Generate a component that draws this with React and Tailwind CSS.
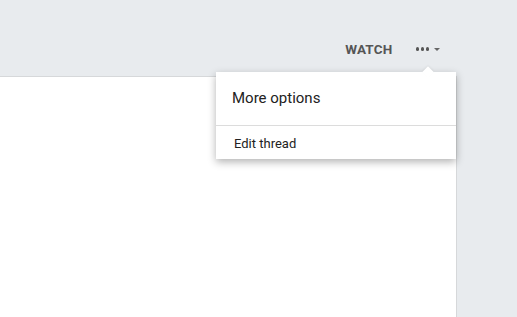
export default function App() {
  return (
    <div className="relative w-[517px] h-[317px] overflow-hidden bg-[#e8ebee] font-['Roboto','Liberation_Sans',sans-serif]">
      {/* Top bar */}
      <div className="h-[76px] flex items-start justify-end pr-[77px] pt-[41px]">
        <span className="text-[13.5px] font-bold text-[#555] tracking-[0.2px] leading-[16px]">WATCH</span>
        <div className="ml-[23px] flex items-center h-[16px] gap-[5px]">
          <div className="flex gap-[1.5px]">
            <span className="w-[3.5px] h-[3.5px] rounded-full bg-[#555]" />
            <span className="w-[3.5px] h-[3.5px] rounded-full bg-[#555]" />
            <span className="w-[3.5px] h-[3.5px] rounded-full bg-[#555]" />
          </div>
          <span className="w-0 h-0 border-l-[3px] border-r-[3px] border-t-[3px] border-l-transparent border-r-transparent border-t-[#666]" />
        </div>
      </div>

      {/* Content area */}
      <div className="flex h-[241px]">
        <div className="w-[457px] bg-white border-t border-r border-[#d6d8da]" />
        <div className="flex-1" />
      </div>

      {/* Menu */}
      <div className="absolute left-[216px] top-[72px] w-[240px] bg-white shadow-[0_3px_8px_rgba(0,0,0,0.3)]">
        <div className="absolute -top-[4px] left-[208px] w-[8px] h-[8px] bg-white rotate-45 shadow-[-1px_-1px_2px_rgba(0,0,0,0.05)]" />
        <div className="relative h-[54px] pl-[16px] pt-[14px] border-b border-[#dcdcdc]">
          <span className="text-[15px] text-[#222] leading-[20px]">More options</span>
        </div>
        <div className="relative h-[33px] pl-[18px] pt-[5px]">
          <span className="text-[13px] text-[#222] leading-[16px]">Edit thread</span>
        </div>
      </div>
    </div>
  );
}
